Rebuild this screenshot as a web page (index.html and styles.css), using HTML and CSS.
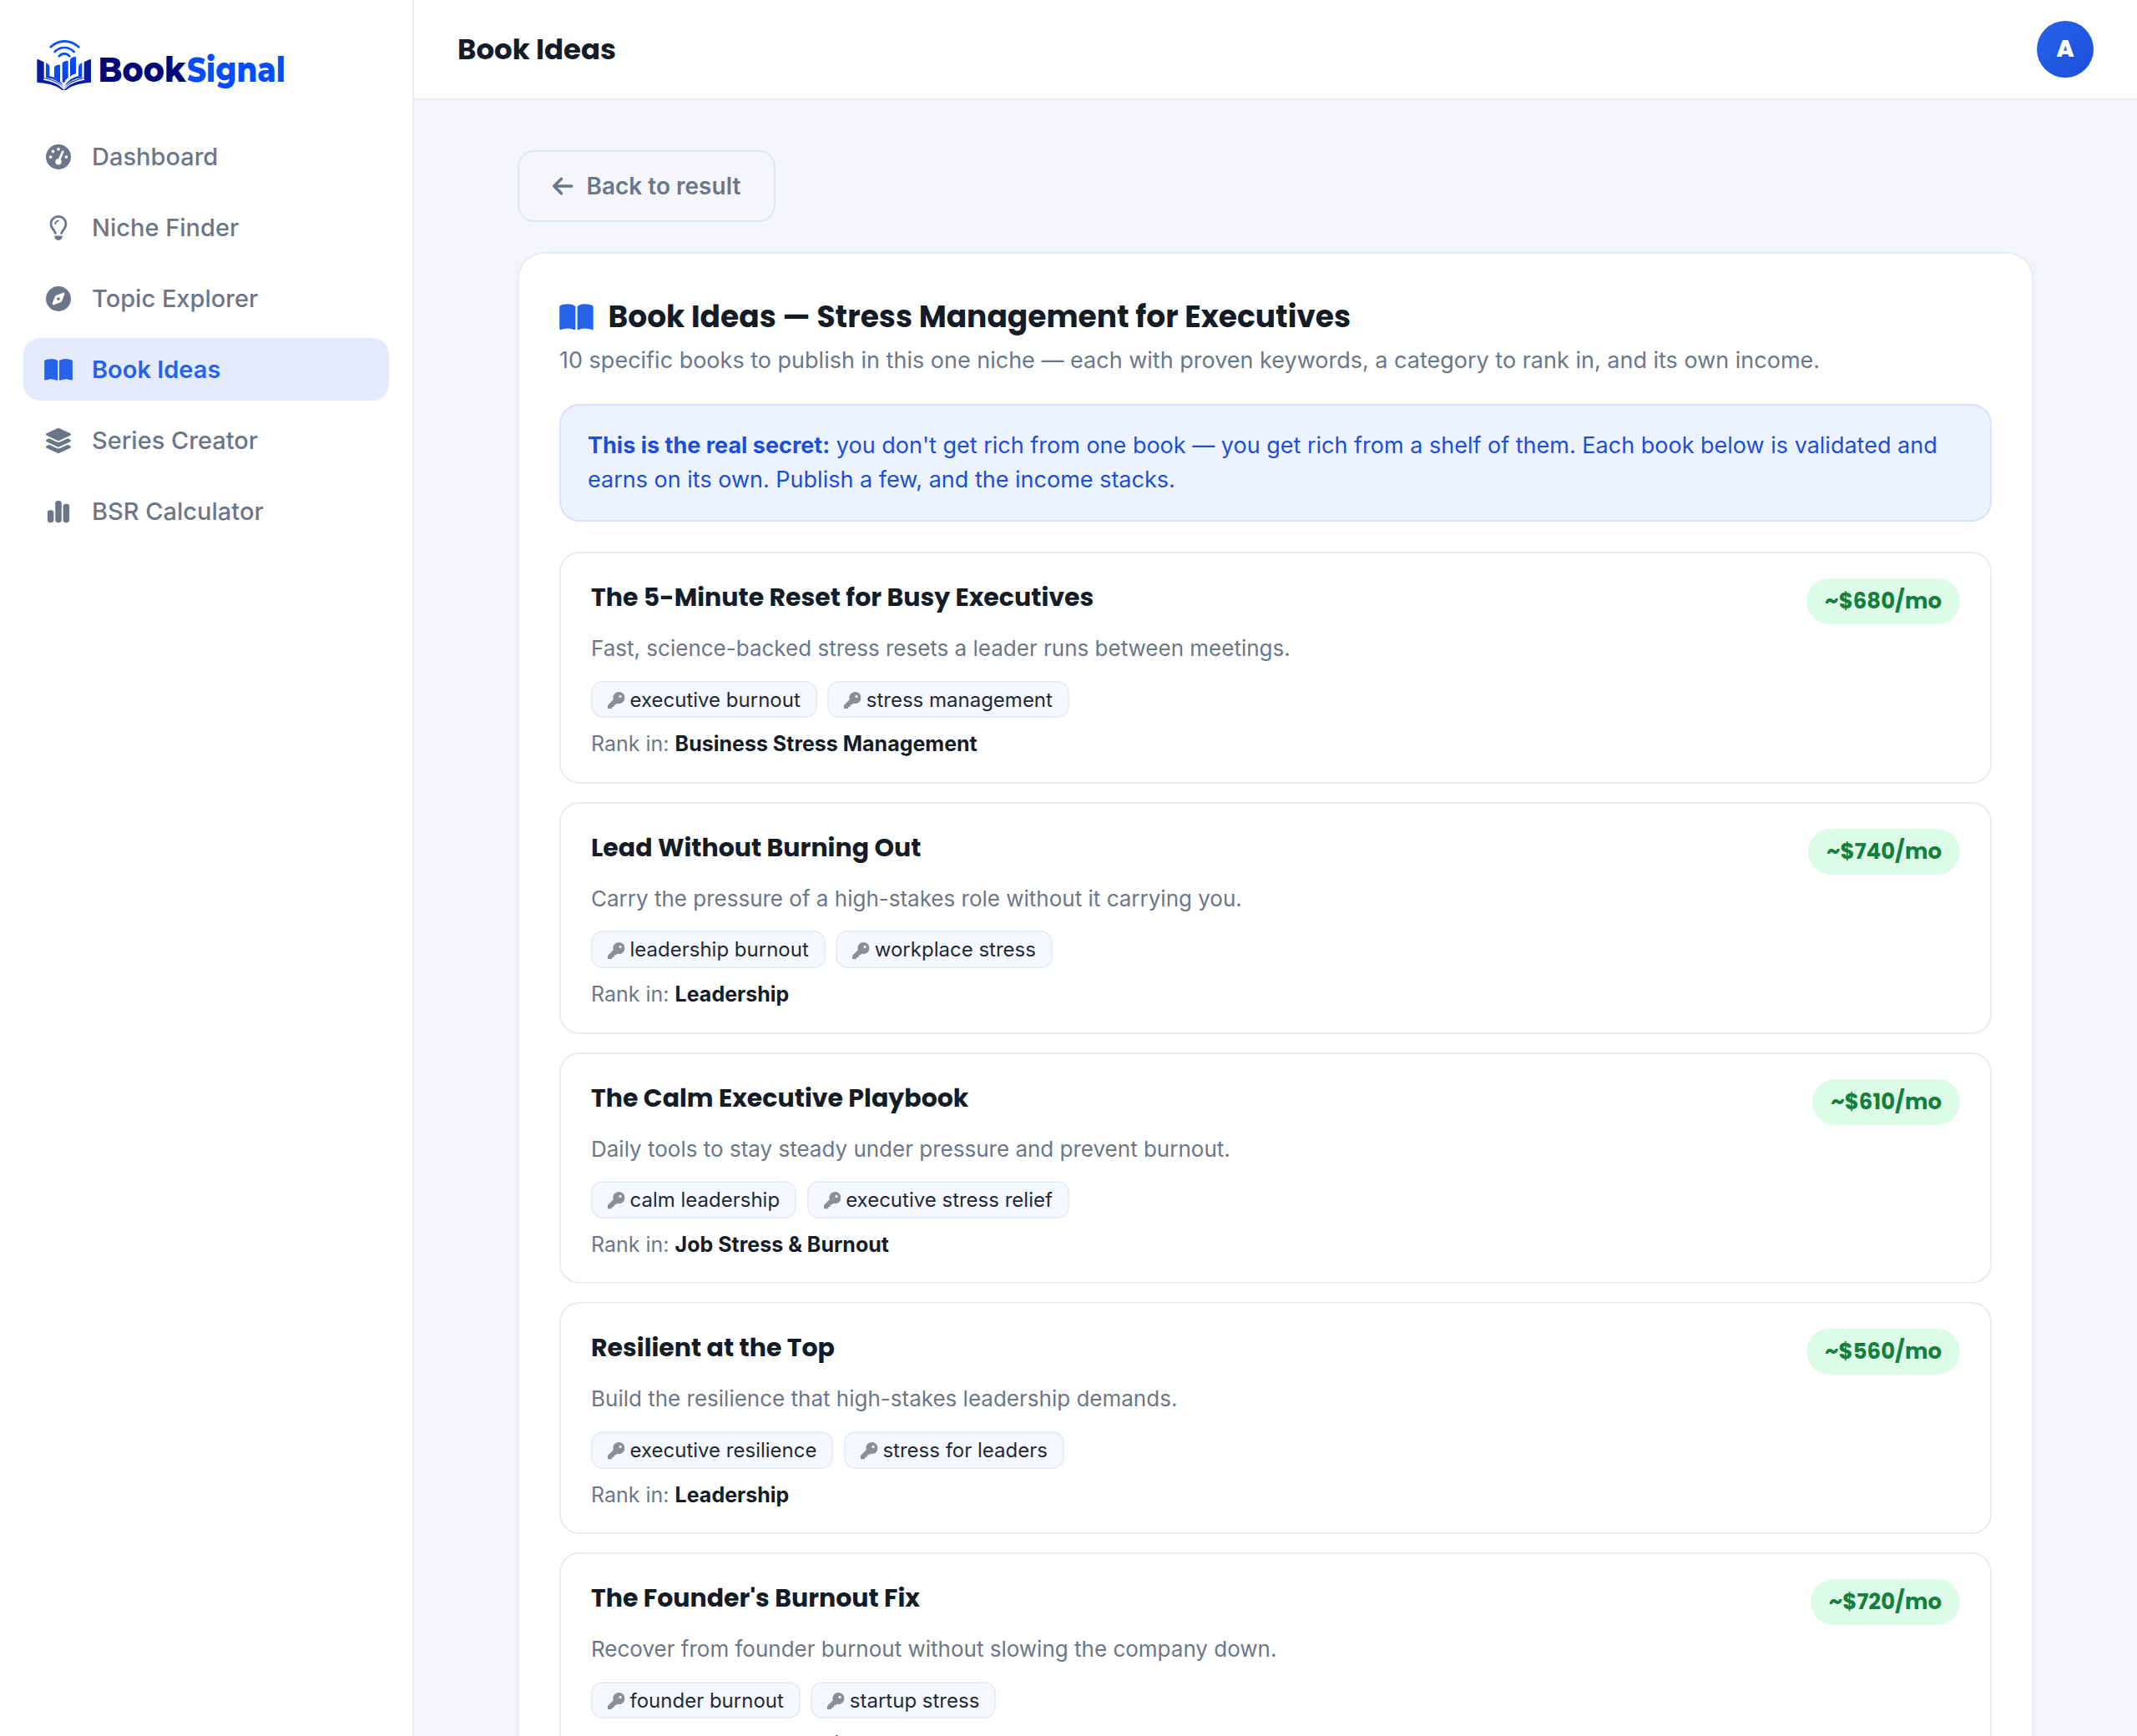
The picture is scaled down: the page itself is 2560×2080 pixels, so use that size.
FILE: index.html
```html
<!DOCTYPE html>
<html lang="en">
<head>
<meta charset="utf-8">
<title>BookSignal – Book Ideas</title>
<link rel="stylesheet" href="styles.css">
</head>
<body>
<svg class="sprite" aria-hidden="true">
  <symbol id="i-gauge" viewBox="0 0 512 512"><path d="M0 256a256 256 0 1 1 512 0A256 256 0 1 1 0 256zM288 96a32 32 0 1 0 -64 0 32 32 0 1 0 64 0zM256 416c35.3 0 64-28.7 64-64c0-17.4-6.9-33.1-18.1-44.6L366 161.7c5.3-12.1-.2-26.3-12.3-31.6s-26.3 .2-31.6 12.3L257.9 288c-.6 0-1.3 0-1.9 0c-35.3 0-64 28.7-64 64s28.7 64 64 64zM176 144a32 32 0 1 0 -64 0 32 32 0 1 0 64 0zM96 288a32 32 0 1 0 0-64 32 32 0 1 0 0 64zm352-32a32 32 0 1 0 -64 0 32 32 0 1 0 64 0z"/></symbol>
  <symbol id="i-bulb" viewBox="0 0 384 512"><path d="M297.2 248.9C311.6 228.3 320 203.2 320 176c0-70.7-57.3-128-128-128S64 105.3 64 176c0 27.2 8.4 52.3 22.8 72.9c3.7 5.3 8.1 11.3 12.8 17.7c12.9 17.7 28.3 38.9 39.8 59.8c10.4 19 15.7 38.8 18.3 57.5H109c-2.2-12-5.9-23.7-11.8-34.5c-9.9-18-22.2-34.9-34.5-51.8c-5.2-7.1-10.4-14.2-15.4-21.4C27.6 247.9 16 213.3 16 176C16 78.8 94.8 0 192 0s176 78.8 176 176c0 37.3-11.6 71.9-31.4 100.3c-5 7.2-10.2 14.3-15.4 21.4c-12.3 16.8-24.6 33.7-34.5 51.8c-5.9 10.8-9.6 22.5-11.8 34.5H226.4c2.6-18.7 7.9-38.6 18.3-57.5c11.5-20.9 26.9-42.1 39.8-59.8c4.7-6.4 9-12.4 12.7-17.7zM192 128c-26.5 0-48 21.5-48 48c0 8.8-7.2 16-16 16s-16-7.2-16-16c0-44.2 35.8-80 80-80c8.8 0 16 7.2 16 16s-7.2 16-16 16zm0 384c-44.2 0-80-35.8-80-80V416H272v16c0 44.2-35.8 80-80 80z"/></symbol>
  <symbol id="i-compass" viewBox="0 0 512 512"><path d="M256 512A256 256 0 1 0 256 0a256 256 0 1 0 0 512zm50.7-186.9L162.4 380.6c-19.4 7.5-38.5-11.6-31-31l55.5-144.3c3.3-8.5 9.9-15.1 18.4-18.4l144.3-55.5c19.4-7.5 38.5 11.6 31 31L325.1 306.7c-3.2 8.5-9.9 15.1-18.4 18.4zM288 256a32 32 0 1 0 -64 0 32 32 0 1 0 64 0z"/></symbol>
  <symbol id="i-book" viewBox="0 0 576 512"><path d="M249.6 471.5c10.8 3.8 22.4-4.1 22.4-15.5V78.6c0-4.2-1.6-8.4-5-11C247.4 52 202.4 32 144 32C93.5 32 46.3 45.3 18.1 56.1C6.8 60.5 0 71.7 0 83.8V454.1c0 11.9 12.8 20.2 24.1 16.5C55.6 460.1 105.5 448 144 448c33.9 0 79 14 105.6 23.5zm76.8 0C353 462 398.1 448 432 448c38.5 0 88.4 12.1 119.9 22.6c11.3 3.8 24.1-4.6 24.1-16.5V83.8c0-12.1-6.8-23.3-18.1-27.6C529.7 45.3 482.5 32 432 32c-58.4 0-103.4 20-123 35.6c-3.3 2.6-5 6.8-5 11V456c0 11.4 11.7 19.3 22.4 15.5z"/></symbol>
  <symbol id="i-layers" viewBox="0 0 576 512"><path d="M264.5 5.2c14.9-6.9 32.1-6.9 47 0l218.6 101c8.5 3.9 13.9 12.4 13.9 21.8s-5.4 17.9-13.9 21.8l-218.6 101c-14.9 6.9-32.1 6.9-47 0L45.9 149.8C37.4 145.8 32 137.3 32 128s5.4-17.9 13.9-21.8L264.5 5.2zM476.9 209.6l53.2 24.6c8.5 3.9 13.9 12.4 13.9 21.8s-5.4 17.9-13.9 21.8l-218.6 101c-14.9 6.9-32.1 6.9-47 0L45.9 277.8C37.4 273.8 32 265.3 32 256s5.4-17.9 13.9-21.8l53.2-24.6 152 70.2c23.4 10.8 50.4 10.8 73.8 0l152-70.2zm-152 198.2l152-70.2 53.2 24.6c8.5 3.9 13.9 12.4 13.9 21.8s-5.4 17.9-13.9 21.8l-218.6 101c-14.9 6.9-32.1 6.9-47 0L45.9 405.8C37.4 401.8 32 393.3 32 384s5.4-17.9 13.9-21.8l53.2-24.6 152 70.2c23.4 10.8 50.4 10.8 73.8 0z"/></symbol>
  <symbol id="i-chart" viewBox="0 0 448 512"><path d="M160 80c0-26.5 21.5-48 48-48h32c26.5 0 48 21.5 48 48V432c0 26.5-21.5 48-48 48H208c-26.5 0-48-21.5-48-48V80zM0 272c0-26.5 21.5-48 48-48H80c26.5 0 48 21.5 48 48V432c0 26.5-21.5 48-48 48H48c-26.5 0-48-21.5-48-48V272zM368 96h32c26.5 0 48 21.5 48 48V432c0 26.5-21.5 48-48 48H368c-26.5 0-48-21.5-48-48V144c0-26.5 21.5-48 48-48z"/></symbol>
  <symbol id="i-arrow" viewBox="0 0 448 512"><path d="M9.4 233.4c-12.5 12.5-12.5 32.8 0 45.3l160 160c12.5 12.5 32.8 12.5 45.3 0s12.5-32.8 0-45.3L109.2 288 416 288c17.7 0 32-14.3 32-32s-14.3-32-32-32l-306.7 0L214.6 118.6c12.5-12.5 12.5-32.8 0-45.3s-32.8-12.5-45.3 0l-160 160z"/></symbol>
  <symbol id="i-key" viewBox="0 0 512 512"><path d="M336 352c97.2 0 176-78.8 176-176S433.2 0 336 0S160 78.8 160 176c0 18.7 2.9 36.8 8.3 53.7L7 391c-4.5 4.5-7 10.6-7 17v80c0 13.3 10.7 24 24 24h80c13.3 0 24-10.7 24-24V448h40c13.3 0 24-10.7 24-24V384h40c6.4 0 12.5-2.5 17-7l33.3-33.3c16.9 5.4 35 8.3 53.7 8.3zM376 96a40 40 0 1 1 0 80 40 40 0 1 1 0-80z"/></symbol>
</svg>

<div class="app">
  <aside class="sidebar">
    <a class="logo">
      <svg width="300" height="68" viewBox="0 0 300 68">
        <defs>
          <linearGradient id="cover" x1="0" y1="0" x2="0" y2="1"><stop offset="0" stop-color="#0a1c8e"/><stop offset="1" stop-color="#0620ae"/></linearGradient>
          <linearGradient id="bar" x1="0" y1="0" x2="0" y2="1"><stop offset="0" stop-color="#0550ff"/><stop offset="1" stop-color="#0b3fe0"/></linearGradient>
        </defs>
        <g transform="scale(.33333)">
          <g fill="none" stroke="#0550ff" stroke-width="8" stroke-linecap="round">
            <path d="M62 37Q84 16 112 16T163 37"/>
            <path d="M77 54Q92 39 111 39T146 54"/>
            <path d="M92 70Q100 61 111 61T130 70"/>
          </g>
          <path fill="url(#cover)" d="M13 84Q13 80 18 82L38 91V148Q88 155 110 186Q132 155 182 148V91L203 81Q207 80 207 84V164Q150 168 124 187Q121 191 117 192H104Q99 191 96 187Q70 168 13 164Z"/>
          <path d="M38 150Q90 160 110 187Q132 160 182 150L184 155Q140 162 120 182L110 191L100 182Q80 162 36 155Z" fill="#fff"/>
          <g fill="url(#bar)">
            <path d="M45 94Q56 98 58 108V141Q93 148 108 178Q84 152 45 148Z"/>
            <path d="M175 94Q164 98 162 108V141Q127 148 112 178Q136 152 175 148Z"/>
            <path d="M75 108Q85 98 96 101V164Q88 152 75 146Z"/>
            <path d="M104 94Q113 84 125 87V146Q114 156 111 166L104 163Z"/>
            <path d="M132 80Q141 70 153 73V133Q140 135 132 143Z"/>
          </g>
        </g>
        <text class="logo-text" x="77.5" y="54" textLength="105" lengthAdjust="spacingAndGlyphs" fill="#020a78">Book</text>
        <text class="logo-text" x="184" y="54" textLength="118" lengthAdjust="spacingAndGlyphs" fill="#054cff">Signal</text>
      </svg>
    </a>
    <nav class="nav">
      <a class="nav-item"><svg class="ico"><use href="#i-gauge"/></svg>Dashboard</a>
      <a class="nav-item"><svg class="ico"><use href="#i-bulb"/></svg>Niche Finder</a>
      <a class="nav-item"><svg class="ico"><use href="#i-compass"/></svg>Topic Explorer</a>
      <a class="nav-item active"><svg class="ico"><use href="#i-book"/></svg>Book Ideas</a>
      <a class="nav-item"><svg class="ico"><use href="#i-layers"/></svg>Series Creator</a>
      <a class="nav-item"><svg class="ico"><use href="#i-chart"/></svg>BSR Calculator</a>
    </nav>
  </aside>

  <div class="main">
    <header class="topbar">
      <h1>Book Ideas</h1>
      <div class="avatar">A</div>
    </header>

    <main class="content">
      <a class="back"><svg><use href="#i-arrow"/></svg>Back to result</a>

      <section class="panel">
        <h2><svg><use href="#i-book"/></svg>Book Ideas — Stress Management for Executives</h2>
        <p class="sub">10 specific books to publish in this one niche — each with proven keywords, a category to rank in, and its own income.</p>
        <div class="note"><strong>This is the real secret:</strong> you don't get rich from one book — you get rich from a shelf of them. Each book below is validated and earns on its own. Publish a few, and the income stacks.</div>

        <div class="books">
          <article class="book">
            <div class="book-head"><h3>The 5-Minute Reset for Busy Executives</h3><span class="income">~$680/mo</span></div>
            <p class="desc">Fast, science-backed stress resets a leader runs between meetings.</p>
            <div class="chips"><span class="chip"><svg><use href="#i-key"/></svg>executive burnout</span><span class="chip"><svg><use href="#i-key"/></svg>stress management</span></div>
            <p class="rank">Rank in: <strong>Business Stress Management</strong></p>
          </article>
          <article class="book">
            <div class="book-head"><h3>Lead Without Burning Out</h3><span class="income">~$740/mo</span></div>
            <p class="desc">Carry the pressure of a high-stakes role without it carrying you.</p>
            <div class="chips"><span class="chip"><svg><use href="#i-key"/></svg>leadership burnout</span><span class="chip"><svg><use href="#i-key"/></svg>workplace stress</span></div>
            <p class="rank">Rank in: <strong>Leadership</strong></p>
          </article>
          <article class="book">
            <div class="book-head"><h3>The Calm Executive Playbook</h3><span class="income">~$610/mo</span></div>
            <p class="desc">Daily tools to stay steady under pressure and prevent burnout.</p>
            <div class="chips"><span class="chip"><svg><use href="#i-key"/></svg>calm leadership</span><span class="chip"><svg><use href="#i-key"/></svg>executive stress relief</span></div>
            <p class="rank">Rank in: <strong>Job Stress &amp; Burnout</strong></p>
          </article>
          <article class="book">
            <div class="book-head"><h3>Resilient at the Top</h3><span class="income">~$560/mo</span></div>
            <p class="desc">Build the resilience that high-stakes leadership demands.</p>
            <div class="chips"><span class="chip"><svg><use href="#i-key"/></svg>executive resilience</span><span class="chip"><svg><use href="#i-key"/></svg>stress for leaders</span></div>
            <p class="rank">Rank in: <strong>Leadership</strong></p>
          </article>
          <article class="book">
            <div class="book-head"><h3>The Founder's Burnout Fix</h3><span class="income">~$720/mo</span></div>
            <p class="desc">Recover from founder burnout without slowing the company down.</p>
            <div class="chips"><span class="chip"><svg><use href="#i-key"/></svg>founder burnout</span><span class="chip"><svg><use href="#i-key"/></svg>startup stress</span></div>
            <p class="rank">Rank in: <strong>Entrepreneurship</strong></p>
          </article>
        </div>
      </section>
    </main>
  </div>
</div>
</body>
</html>
```
FILE: styles.css
```css
* { box-sizing: border-box; margin: 0; padding: 0; }

:root {
  --ink: #141c28;
  --muted: #6b7789;
  --line: #e8edf4;
  --blue: #2563eb;
  --heading: "Poppins", "Inter", sans-serif;
}

body {
  font-family: "Inter", sans-serif;
  color: var(--ink);
  background: #f4f6fb;
}

svg { fill: currentColor; flex: none; }
.sprite { display: none; }

.app { display: flex; height: 2080px; overflow: hidden; }

/* Sidebar */
.sidebar {
  flex: none;
  width: 496px;
  padding: 44px 28px 0;
  background: #fff;
  border-right: 2px solid var(--line);
}
.logo { display: block; height: 106px; padding-left: 12px; }
.logo svg { display: block; overflow: visible; }
.logo-text { font: 800 42px "Montserrat", "Inter", sans-serif; }

.nav { display: flex; flex-direction: column; gap: 10px; }
.nav-item {
  display: flex;
  align-items: center;
  gap: 20px;
  height: 75px;
  padding: 0 22px;
  border-radius: 20px;
  font-size: 29px;
  font-weight: 500;
  color: var(--muted);
}
.nav-item.active { background: #e5ebfe; color: var(--blue); font-weight: 600; }
.ico { width: 40px; height: 30px; }

/* Top bar */
.main { flex: 1; min-width: 0; }
.topbar {
  display: flex;
  align-items: center;
  justify-content: space-between;
  height: 120px;
  padding: 0 52px;
  background: #fdfdfe;
  border-bottom: 2px solid var(--line);
}
.topbar h1 { font: 700 34px/1.5 var(--heading); }
.avatar {
  display: grid;
  place-items: center;
  width: 68px;
  height: 68px;
  border-radius: 50%;
  background: linear-gradient(135deg, #2563eb, #1d4ed8);
  color: #fff;
  font: 800 28px/1 var(--heading);
}

/* Content */
.content {
  display: flex;
  flex-direction: column;
  align-items: flex-start;
  gap: 36px;
  width: 1816px;
  margin: 0 auto;
  padding-top: 60px;
}
.back {
  display: flex;
  align-items: center;
  gap: 16px;
  height: 86px;
  padding: 0 40px;
  border: 2px solid #dfe7f1;
  border-radius: 20px;
  font-size: 28px;
  font-weight: 600;
  color: var(--muted);
}
.back svg { width: 24.5px; height: 28px; }

.panel {
  width: 100%;
  padding: 49px 48px 48px;
  background: #fff;
  border: 2px solid var(--line);
  border-radius: 32px;
  box-shadow: 0 2px 8px rgba(15, 23, 42, .04);
}
.panel h2 {
  display: flex;
  align-items: center;
  gap: 17.5px;
  font: 700 36px/54px var(--heading);
}
.panel h2 svg { width: 41px; height: 36px; color: var(--blue); }
.sub { margin-top: 5px; font-size: 27px; line-height: 40px; color: var(--muted); }
.note {
  margin: 32px 0 36.5px;
  padding: 26.5px 32px;
  border: 2px solid #d6e4fe;
  border-radius: 24px;
  background: #ecf3ff;
  color: #1d4ed8;
  font-size: 27px;
  line-height: 1.55;
}

.books { display: flex; flex-direction: column; gap: 22px; }
.book {
  height: 277.75px;
  padding: 30px 36px 0;
  border: 2px solid var(--line);
  border-radius: 24px;
}
.book-head { display: flex; align-items: flex-start; justify-content: space-between; }
.book h3 { font: 700 30px/45px var(--heading); }
.income {
  padding: 8px 22px;
  border-radius: 28px;
  background: #dcfce7;
  color: #15803d;
  font: 700 26px/39px var(--heading);
}
.desc { margin-top: 9px; font-size: 26px; line-height: 39px; color: var(--muted); }
.chips { display: flex; gap: 12.5px; margin-top: 19.5px; }
.chip {
  display: flex;
  align-items: center;
  gap: 6px;
  height: 44.75px;
  padding: 0 18px;
  border: 2px solid var(--line);
  border-radius: 14px;
  background: #f5f8fe;
  color: #1f2937;
  font-size: 24px;
}
.chip svg { width: 20.5px; height: 20.5px; margin-top: 2px; opacity: .5; }
.rank { margin-top: 13px; font-size: 25px; line-height: 37.5px; color: var(--muted); }
.rank strong { font-weight: 700; color: var(--ink); }
```
